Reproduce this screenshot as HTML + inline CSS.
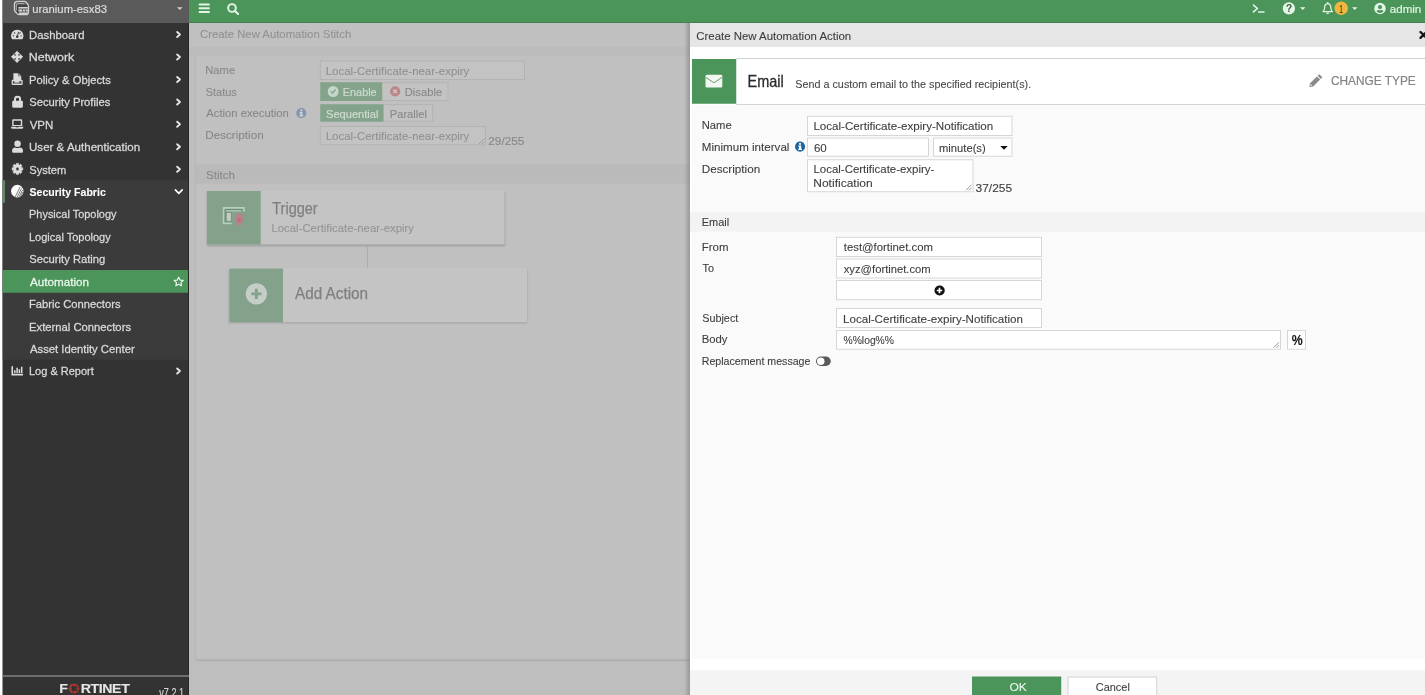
<!DOCTYPE html>
<html lang="en">
<head>
<meta charset="utf-8">
<title>FortiGate - uranium-esx83</title>
<style>
*{box-sizing:border-box;margin:0;padding:0}
#app{font-family:"Liberation Sans",sans-serif;font-size:48px;color:#3b3b3b;position:absolute;left:0;top:0;width:5700px;height:2780px;background:#fff;overflow:hidden}
ul{list-style:none}
.t{position:absolute;white-space:nowrap;transform-origin:0 50%;display:block;-webkit-text-stroke:0.4px currentColor}
.b{position:absolute;display:block}
svg{position:absolute;display:block;overflow:visible}
#side{position:absolute;left:10.4px;top:0;width:745.6px;height:2780px;background:#333;color:#dadada;overflow:hidden}
#host{position:absolute;left:0;top:0;width:100%;height:92px;background:#5a5a5a;color:#d6d6d6}
#top{position:absolute;left:756px;top:0;width:4944px;height:92px;background:#4b945a;color:#e4f5e6}
#main{position:absolute;left:756px;top:92px;width:2004px;height:2688px;background:#bebebe;color:#8c8c8c;overflow:hidden}
#panel{position:absolute;left:2760px;top:92px;width:2940px;height:2688px;background:#fafafa;overflow:hidden}
#shadow{position:absolute;left:2736px;top:92px;width:24px;height:2688px;background:linear-gradient(to right,rgba(120,120,120,0),rgba(120,120,120,.55))}
.inp{position:absolute;background:#fff;border:4px solid #d6d6d6}

html,body{width:1425px;height:695px;overflow:hidden;background:#fff;margin:0;padding:0}
#stage{position:absolute;left:0;top:0;width:1425px;height:695px;overflow:hidden;will-change:transform}
#app{transform:scale(0.25);transform-origin:0 0}
</style>
</head>
<body>
<div id="stage">
<div id="app">
<nav id="side"><div id="host"><svg style="left:44.8px;top:3.2px;width:61.6px;height:58.4px;color:#d2d2d2;" viewBox="0 0 15.4 14.6" preserveAspectRatio="none" fill="currentColor" aria-hidden="true"><path d="M3.6 0.7 H10.6 Q11.5 0.7 12.1 1.3 L14.1 3.5 Q14.7 4.1 14.7 5 V11.2 Q14.7 13.9 12 13.9 H5.3 Q4.5 13.9 3.9 13.3 L1.3 10.7 Q0.7 10.1 0.7 9.3 V3.6 Q0.7 0.7 3.6 0.7 Z" fill="none" stroke="currentColor" stroke-width="1.3" stroke-linejoin="round"/><path d="M2.6 9.6 V4.2 Q2.6 2.7 4.1 2.7 H10.6" fill="none" stroke="currentColor" stroke-width="0.8" opacity="0.85"/><path d="M4.2 4.4 H13.6 V5.9 H4.2 Z" fill="#3a3a3a"/><path d="M4.6 6.3 H14 V7.7 H4.6 Z M4.6 8.7 H8.4 V10.8 H4.6 Z M9.2 8.7 H11.2 V10.8 H9.2 Z M12 8.7 H14 V10.8 H12 Z M4.8 11.7 H14 V12.6 Q13.6 13.3 12.6 13.3 H5.6 Z"/><path d="M3.9 5 V12.6" stroke="#3a3a3a" stroke-width="1.1" fill="none"/></svg><span class="t" style="left:118.64px;top:7.6px;font-size:46px;line-height:56px;transform:scaleX(0.9819);color:#dcdcdc;-webkit-text-stroke:0.88px currentColor;">uranium-esx83</span><svg style="left:697.6px;top:28.8px;width:22.4px;height:11.2px;color:#cfcfcf;" viewBox="0 0 10 5" preserveAspectRatio="none" fill="currentColor" aria-hidden="true"><path d="M0 0 H10 L5 5 Z"/></svg></div><div class="b" style="left:0px;top:721.2px;width:745.6px;height:718px;background:#3b3b3b;"></div><div class="b" style="left:0px;top:721.2px;width:10px;height:90px;background:#5f8b69;"></div><div class="b" style="left:0px;top:1079.6px;width:745.6px;height:91.6px;background:#4b945a;"></div><ul><li><svg style="left:33.2px;top:118.8px;width:50px;height:38px;color:#dcdcdc;" viewBox="0.5 1 23 18" preserveAspectRatio="none" fill="currentColor" aria-hidden="true"><path d="M12 1 A11.5 11.5 0 0 0 2.2 18.4 Q2.6 19 3.4 19 H20.6 Q21.4 19 21.8 18.4 A11.5 11.5 0 0 0 12 1 Z"/><g fill="#333"><circle cx="5" cy="12.5" r="1.3"/><circle cx="7" cy="7.2" r="1.3"/><circle cx="19" cy="12.5" r="1.3"/><circle cx="17" cy="7.2" r="1.3"/><path d="M13.6 4.6 L15.2 5.1 L13.4 12.2 A2.4 2.4 0 1 1 11.8 11.7 Z"/></g></svg><span class="t" style="left:105.24px;top:111.6px;font-size:46px;line-height:56px;transform:scaleX(0.9853);-webkit-text-stroke:1.04px currentColor;">Dashboard</span><svg style="left:693.6px;top:124.4px;width:20.8px;height:28px;color:#e8e8e8;" viewBox="0 0 6 8" preserveAspectRatio="none" fill="currentColor" aria-hidden="true"><path d="M1.3 1.1 L4.6 4 L1.3 6.9" fill="none" stroke="currentColor" stroke-width="2.1" stroke-linecap="round" stroke-linejoin="round"/></svg></li><li><svg style="left:34px;top:203.2px;width:48.4px;height:48.4px;color:#dcdcdc;" viewBox="0 0 24 24" preserveAspectRatio="none" fill="currentColor" aria-hidden="true"><path d="M12 0.3 L17.4 6.2 H14.2 V9.8 H17.8 V6.6 L23.7 12 L17.8 17.4 V14.2 H14.2 V17.8 H17.4 L12 23.7 L6.6 17.8 H9.8 V14.2 H6.2 V17.4 L0.3 12 L6.2 6.6 V9.8 H9.8 V6.2 H6.6 Z" stroke="currentColor" stroke-width="0.8" stroke-linejoin="round"/></svg><span class="t" style="left:104.88px;top:201.32px;font-size:46px;line-height:56px;transform:scaleX(1.0805);-webkit-text-stroke:1.04px currentColor;">Network</span><svg style="left:693.6px;top:214.12px;width:20.8px;height:28px;color:#e8e8e8;" viewBox="0 0 6 8" preserveAspectRatio="none" fill="currentColor" aria-hidden="true"><path d="M1.3 1.1 L4.6 4 L1.3 6.9" fill="none" stroke="currentColor" stroke-width="2.1" stroke-linecap="round" stroke-linejoin="round"/></svg></li><li><svg style="left:33.6px;top:291.2px;width:49.2px;height:52px;color:#dcdcdc;" viewBox="0 0 24 26" preserveAspectRatio="none" fill="currentColor" aria-hidden="true"><path d="M4.6 0.8 H14.4 L20 6.4 V14.6 H16.4 L13.6 17.6 H8.8 L6.6 15.4 H4.6 Z"/><path d="M14.6 0.8 V6.2 H20" fill="none" stroke="#333" stroke-width="1.1"/><path d="M3.4 14.2 H20.6 Q22.8 14.2 22.8 16.4 V22.2 Q22.8 24.6 20.4 24.6 H3.6 Q1.2 24.6 1.2 22.2 V16.4 Q1.2 14.2 3.4 14.2 Z M4 17 Q3.6 17 3.6 17.4 V21.6 Q3.6 22.2 4.2 22.2 H19.8 Q20.4 22.2 20.4 21.6 V17.4 Q20.4 17 20 17 H17 L14.4 19.6 H8.2 L5.8 17 Z" fill-rule="evenodd"/><path d="M5 19.4 H19 V21.4 H5 Z" opacity="0.75"/></svg><span class="t" style="left:105.28px;top:291.04px;font-size:46px;line-height:56px;transform:scaleX(0.9763);-webkit-text-stroke:1.04px currentColor;">Policy &amp; Objects</span><svg style="left:693.6px;top:303.84px;width:20.8px;height:28px;color:#e8e8e8;" viewBox="0 0 6 8" preserveAspectRatio="none" fill="currentColor" aria-hidden="true"><path d="M1.3 1.1 L4.6 4 L1.3 6.9" fill="none" stroke="currentColor" stroke-width="2.1" stroke-linecap="round" stroke-linejoin="round"/></svg></li><li><svg style="left:37.2px;top:382.4px;width:44.4px;height:49.6px;color:#dcdcdc;" viewBox="0 0 22 25" preserveAspectRatio="none" fill="currentColor" aria-hidden="true"><path d="M4 10.4 V7.4 A7 7 0 0 1 18 7.4 V10.4 H19.4 Q21.6 10.4 21.6 12.6 V22.4 Q21.6 24.6 19.4 24.6 H2.6 Q0.4 24.6 0.4 22.4 V12.6 Q0.4 10.4 2.6 10.4 Z M8 10.4 H14 V7.4 A3 3 0 0 0 8 7.4 Z" fill-rule="evenodd"/></svg><span class="t" style="left:106.28px;top:380.76px;font-size:46px;line-height:56px;transform:scaleX(0.9756);-webkit-text-stroke:1.04px currentColor;">Security Profiles</span><svg style="left:693.6px;top:393.56px;width:20.8px;height:28px;color:#e8e8e8;" viewBox="0 0 6 8" preserveAspectRatio="none" fill="currentColor" aria-hidden="true"><path d="M1.3 1.1 L4.6 4 L1.3 6.9" fill="none" stroke="currentColor" stroke-width="2.1" stroke-linecap="round" stroke-linejoin="round"/></svg></li><li><svg style="left:33.2px;top:476.8px;width:49.6px;height:38.4px;color:#dcdcdc;" viewBox="0 0 25 19" preserveAspectRatio="none" fill="currentColor" aria-hidden="true"><path d="M4.2 0.2 H20.8 Q22.6 0.2 22.6 2 V13.6 H2.4 V2 Q2.4 0.2 4.2 0.2 Z M5.2 3 V11.2 H19.8 V3 Z" fill-rule="evenodd"/><path d="M0.2 14.8 H9.6 Q9.8 15.8 10.8 15.8 H14.2 Q15.2 15.8 15.4 14.8 H24.8 V15.8 Q24.8 18.8 21.8 18.8 H3.2 Q0.2 18.8 0.2 15.8 Z"/></svg><span class="t" style="left:108.2px;top:470.48px;font-size:46px;line-height:56px;transform:scaleX(1.0000);-webkit-text-stroke:1.04px currentColor;">VPN</span><svg style="left:693.6px;top:483.28px;width:20.8px;height:28px;color:#e8e8e8;" viewBox="0 0 6 8" preserveAspectRatio="none" fill="currentColor" aria-hidden="true"><path d="M1.3 1.1 L4.6 4 L1.3 6.9" fill="none" stroke="currentColor" stroke-width="2.1" stroke-linecap="round" stroke-linejoin="round"/></svg></li><li><svg style="left:37.2px;top:562.4px;width:44.4px;height:49.6px;color:#dcdcdc;" viewBox="0 0 22 25" preserveAspectRatio="none" fill="currentColor" aria-hidden="true"><circle cx="11" cy="6.6" r="6.4"/><path d="M0.2 22.4 V20.6 Q0.2 14.6 6.4 14.2 Q11 16.4 15.6 14.2 Q21.8 14.6 21.8 20.6 V22.4 Q21.8 24.8 19.4 24.8 H2.6 Q0.2 24.8 0.2 22.4 Z"/></svg><span class="t" style="left:105.16px;top:560.2px;font-size:46px;line-height:56px;transform:scaleX(1.0051);-webkit-text-stroke:1.04px currentColor;">User &amp; Authentication</span><svg style="left:693.6px;top:573px;width:20.8px;height:28px;color:#e8e8e8;" viewBox="0 0 6 8" preserveAspectRatio="none" fill="currentColor" aria-hidden="true"><path d="M1.3 1.1 L4.6 4 L1.3 6.9" fill="none" stroke="currentColor" stroke-width="2.1" stroke-linecap="round" stroke-linejoin="round"/></svg></li><li><svg style="left:36.8px;top:651.6px;width:45.6px;height:47.2px;color:#dcdcdc;" viewBox="0 0 24 24" preserveAspectRatio="none" fill="currentColor" aria-hidden="true"><path d="M9.34 3.40 L9.45 0.58 L14.55 0.58 L14.66 3.40 L16.20 4.04 L18.27 2.12 L21.88 5.73 L19.96 7.80 L20.60 9.34 L23.42 9.45 L23.42 14.55 L20.60 14.66 L19.96 16.20 L21.88 18.27 L18.27 21.88 L16.20 19.96 L14.66 20.60 L14.55 23.42 L9.45 23.42 L9.34 20.60 L7.80 19.96 L5.73 21.88 L2.12 18.27 L4.04 16.20 L3.40 14.66 L0.58 14.55 L0.58 9.45 L3.40 9.34 L4.04 7.80 L2.12 5.73 L5.73 2.12 L7.80 4.04 Z M12 8.8 A3.2 3.2 0 1 0 12 15.2 A3.2 3.2 0 1 0 12 8.8 Z" fill-rule="evenodd" stroke="currentColor" stroke-width="0.8" stroke-linejoin="round"/></svg><span class="t" style="left:106.32px;top:649.92px;font-size:46px;line-height:56px;transform:scaleX(0.9660);-webkit-text-stroke:1.04px currentColor;">System</span><svg style="left:693.6px;top:662.72px;width:20.8px;height:28px;color:#e8e8e8;" viewBox="0 0 6 8" preserveAspectRatio="none" fill="currentColor" aria-hidden="true"><path d="M1.3 1.1 L4.6 4 L1.3 6.9" fill="none" stroke="currentColor" stroke-width="2.1" stroke-linecap="round" stroke-linejoin="round"/></svg></li><li><svg style="left:33.6px;top:739.2px;width:50.4px;height:51.2px;color:#fff;" viewBox="0 0 24 24" preserveAspectRatio="none" fill="currentColor" aria-hidden="true"><circle cx="12" cy="12" r="11.8"/><g stroke="#3a3a3a" stroke-width="1.3" fill="none"><path d="M8.2 22.4 L17.4 4.2"/><path d="M11.8 23 L20 7"/><path d="M15.4 22.6 L22 10"/><path d="M19 20.8 L22.8 13.6"/></g></svg><span class="t" style="left:107.36px;top:739.64px;font-size:46px;line-height:56px;transform:scaleX(0.9179);color:#fff;font-weight:bold;">Security Fabric</span><svg style="left:688px;top:756px;width:34.4px;height:20.8px;color:#fff;" viewBox="0 0 10 6" preserveAspectRatio="none" fill="currentColor" aria-hidden="true"><path d="M1 1 L5 5 L9 1" fill="none" stroke="currentColor" stroke-width="1.9" stroke-linecap="round" stroke-linejoin="round"/></svg></li><li><span class="t" style="left:105.4px;top:829.36px;font-size:46px;line-height:56px;transform:scaleX(0.9532);-webkit-text-stroke:1.04px currentColor;">Physical Topology</span></li><li><span class="t" style="left:105.36px;top:919.08px;font-size:46px;line-height:56px;transform:scaleX(0.9555);-webkit-text-stroke:1.04px currentColor;">Logical Topology</span></li><li><span class="t" style="left:106.28px;top:1008.8px;font-size:46px;line-height:56px;transform:scaleX(0.9752);-webkit-text-stroke:1.04px currentColor;">Security Rating</span></li><li><span class="t" style="left:109.2px;top:1098.52px;font-size:46px;line-height:56px;transform:scaleX(1.0139);color:#eaf7ec;-webkit-text-stroke:1.04px currentColor;">Automation</span><svg style="left:682px;top:1103.6px;width:45.6px;height:44.8px;color:#eaf7ec;" viewBox="0 0 24 24" preserveAspectRatio="none" fill="currentColor" aria-hidden="true"><path d="M12 2.4 L14.9 8.7 L21.7 9.5 L16.7 14.2 L18 21 L12 17.6 L6 21 L7.3 14.2 L2.3 9.5 L9.1 8.7 Z" fill="none" stroke="currentColor" stroke-width="2.5" stroke-linejoin="round"/></svg></li><li><span class="t" style="left:105.32px;top:1188.24px;font-size:46px;line-height:56px;transform:scaleX(0.9741);-webkit-text-stroke:1.04px currentColor;">Fabric Connectors</span></li><li><span class="t" style="left:105.28px;top:1277.96px;font-size:46px;line-height:56px;transform:scaleX(0.9791);-webkit-text-stroke:1.04px currentColor;">External Connectors</span></li><li><span class="t" style="left:109.2px;top:1367.68px;font-size:46px;line-height:56px;transform:scaleX(0.9812);-webkit-text-stroke:1.04px currentColor;">Asset Identity Center</span></li><li><svg style="left:34.4px;top:1464.4px;width:48px;height:38.4px;color:#dcdcdc;" viewBox="0 0 24 20" preserveAspectRatio="none" fill="currentColor" aria-hidden="true"><path d="M0.4 0.4 H3.6 V16 H23.6 V19.6 H0.4 Z"/><path d="M5.6 8.6 H8.6 V14.4 H5.6 Z M10.2 3.4 H13.2 V14.4 H10.2 Z M14.8 6.6 H17.8 V14.4 H14.8 Z M19.4 1.6 H22.4 V14.4 H19.4 Z"/></svg><span class="t" style="left:105.36px;top:1457.4px;font-size:46px;line-height:56px;transform:scaleX(0.9558);-webkit-text-stroke:1.04px currentColor;">Log &amp; Report</span><svg style="left:693.6px;top:1470.2px;width:20.8px;height:28px;color:#e8e8e8;" viewBox="0 0 6 8" preserveAspectRatio="none" fill="currentColor" aria-hidden="true"><path d="M1.3 1.1 L4.6 4 L1.3 6.9" fill="none" stroke="currentColor" stroke-width="2.1" stroke-linecap="round" stroke-linejoin="round"/></svg></li></ul><div class="b" style="left:741.6px;top:92px;width:4px;height:2688px;background:#262626;"></div><div class="b" style="left:0px;top:2700px;width:745.6px;height:8px;background:#6e6e6e;"></div><div class="b" id="logo" style="left:0;top:0"><span class="t" style="left:226.88px;top:2729px;font-size:48px;line-height:56px;transform:scaleX(1.1799);color:#e6e6e6;font-weight:bold;"><span style="letter-spacing:2px">F</span><span style="color:#c8372d;-webkit-text-stroke:1.8px #c8372d;letter-spacing:4px">O</span><span style="letter-spacing:-1.36px">RTINET</span></span></div><svg style="left:268px;top:2737.2px;width:43.2px;height:35.2px;" viewBox="0 0 11.3 8.8" preserveAspectRatio="none" fill="currentColor" aria-hidden="true"><path d="M3.6 0 V8.8 M7.7 0 V8.8 M0 2.9 H11.3 M0 5.9 H11.3" stroke="#333" stroke-width="0.7" fill="none"/></svg><span class="t" style="left:626.4px;top:2742px;font-size:49.2px;line-height:60px;transform:scaleX(0.7394);color:#d4d4d4;-webkit-text-stroke:0.8px currentColor;">v7.2.1</span></nav>
<header id="top"><div class="b" style="left:0px;top:88px;width:4944px;height:4px;background:#447f51;"></div><svg style="left:38.8px;top:14.4px;width:44px;height:38.4px;" viewBox="0 0 22 20" preserveAspectRatio="none" fill="currentColor" aria-hidden="true"><rect x="0" y="0.2" width="22" height="4.2" rx="1.2"/><rect x="0" y="7.9" width="22" height="4.2" rx="1.2"/><rect x="0" y="15.6" width="22" height="4.2" rx="1.2"/></svg><svg style="left:152px;top:12px;width:48.8px;height:48.8px;" viewBox="0 0 24 24" preserveAspectRatio="none" fill="currentColor" aria-hidden="true"><circle cx="9.8" cy="9.8" r="7.6" fill="none" stroke="currentColor" stroke-width="3.8"/><path d="M15.6 15.6 L21.8 21.8" stroke="currentColor" stroke-width="4.2" stroke-linecap="round"/></svg><svg style="left:4254.4px;top:16px;width:49.6px;height:36px;" viewBox="0 0 26 20" preserveAspectRatio="none" fill="currentColor" aria-hidden="true"><path d="M2 2.4 L10.4 10 L2 17.6" fill="none" stroke="currentColor" stroke-width="3.5" stroke-linecap="round" stroke-linejoin="round"/><path d="M12.8 17.6 H24" stroke="currentColor" stroke-width="3.4" stroke-linecap="round"/></svg><div class="b" style="left:4375.2px;top:9.2px;width:48.8px;height:48.8px;border-radius:50%;background:#e4f5e6;"></div><span class="t" style="left:4388.08px;top:9.2px;font-size:42px;line-height:52px;transform:scaleX(0.9524);color:#3a6c46;font-weight:bold;">?</span><svg style="left:4444px;top:28.8px;width:21.6px;height:11.2px;" viewBox="0 0 10 5" preserveAspectRatio="none" fill="currentColor" aria-hidden="true"><path d="M0 0 H10 L5 5 Z"/></svg><svg style="left:4533.2px;top:8.4px;width:43.6px;height:49.6px;" viewBox="0 0 22 25" preserveAspectRatio="none" fill="currentColor" aria-hidden="true"><path d="M11 3.2 Q4.8 4 4.8 11 Q4.8 16.4 1.4 19.4 H20.6 Q17.2 16.4 17.2 11 Q17.2 4 11 3.2 Z" fill="none" stroke="currentColor" stroke-width="2.5" stroke-linejoin="round"/><circle cx="11" cy="2" r="1.9"/><path d="M8 21.8 A3 3 0 0 0 14 21.8 Z"/></svg><div class="b" style="left:4581.6px;top:6px;width:54.4px;height:54.4px;border-radius:50%;background:#efb73e;"></div><span class="t" style="left:4601px;top:9px;font-size:44.8px;line-height:52px;transform:scaleX(0.6000);color:#3a2f14;">1</span><svg style="left:4652px;top:28.8px;width:21.6px;height:11.2px;" viewBox="0 0 10 5" preserveAspectRatio="none" fill="currentColor" aria-hidden="true"><path d="M0 0 H10 L5 5 Z"/></svg><svg style="left:4740px;top:9.6px;width:48px;height:48px;" viewBox="0 0 24 24" preserveAspectRatio="none" fill="currentColor" aria-hidden="true"><path d="M12 0.5 A11.5 11.5 0 1 0 12 23.5 A11.5 11.5 0 1 0 12 0.5 Z M12 5 A4.2 4.2 0 1 1 12 13.4 A4.2 4.2 0 1 1 12 5 Z M12 21 Q7.5 21 5 17.6 Q6.2 15 9 15 Q12 16.2 15 15 Q17.8 15 19 17.6 Q16.5 21 12 21 Z" fill-rule="evenodd"/></svg><span class="t" style="left:4802.8px;top:7.6px;font-size:46.8px;line-height:56px;transform:scaleX(0.9902);-webkit-text-stroke:0.8px currentColor;">admin</span></header>
<main id="main"><div class="b" style="left:0px;top:0px;width:2004px;height:96.8px;background:#c0c0c0;"></div><div class="b" style="left:0px;top:96.8px;width:2004px;height:32px;background:#bcbcbc;"></div><span class="t" style="left:44.44px;top:16.8px;font-size:46.4px;line-height:56px;transform:scaleX(0.9772);color:#919191;">Create New Automation Stitch</span><div class="b" style="left:24px;top:125.6px;width:2000px;height:2420.8px;background:#c0c0c0;border:4px solid #b8b8b8;box-shadow:0 4px 4px rgba(0,0,0,.10);"></div><span class="t" style="left:65.32px;top:159.2px;font-size:46.4px;line-height:56px;transform:scaleX(0.9695);color:#878787;">Name</span><span class="t" style="left:67.32px;top:246.4px;font-size:46.4px;line-height:56px;transform:scaleX(0.9437);color:#878787;">Status</span><span class="t" style="left:69.2px;top:333.2px;font-size:46.4px;line-height:56px;transform:scaleX(0.9709);color:#878787;">Action execution</span><span class="t" style="left:65.16px;top:419.6px;font-size:46.4px;line-height:56px;transform:scaleX(1.0062);color:#878787;">Description</span><svg style="left:429.2px;top:339.6px;width:40.4px;height:40.8px;" viewBox="0 0 20 20" preserveAspectRatio="none" fill="currentColor" aria-hidden="true"><circle cx="10" cy="10" r="10" fill="#8396ab"/><circle cx="10" cy="4.7" r="2.1" fill="#cdd3d9"/><path d="M6.6 7.9 H12.3 V14 H13.8 V16.6 H6.3 V14 H7.9 V10.2 H6.6 Z" fill="#cdd3d9"/></svg><div class="b" style="left:523.2px;top:149.6px;width:821.2px;height:78.4px;background:#c3c3c3;border:4px solid #b3b3b3;"></div><span class="t" style="left:547.24px;top:162.8px;font-size:46.4px;line-height:56px;transform:scaleX(0.9855);color:#909090;">Local-Certificate-near-expiry</span><div class="b" style="left:524.8px;top:237.2px;width:248.8px;height:74.4px;background:#83a38b;"></div><div class="b" style="left:554.8px;top:252.4px;width:43.2px;height:43.2px;border-radius:50%;background:#c6d6c9;"></div><svg style="left:563.6px;top:262.4px;width:25.6px;height:22.4px;" viewBox="0 0 8 7" preserveAspectRatio="none" fill="currentColor" aria-hidden="true"><path d="M1 3.6 L3.1 5.7 L7 1.2" fill="none" stroke="#83a38b" stroke-width="1.7"/></svg><span class="t" style="left:615.04px;top:248px;font-size:46.4px;line-height:56px;transform:scaleX(0.9391);color:#cfdcd1;-webkit-text-stroke:0.8px currentColor;">Enable</span><div class="b" style="left:773.6px;top:237.2px;width:264px;height:74.4px;background:#c3c3c3;border:4px solid #b3b3b3;border-left:0;"></div><div class="b" style="left:804.4px;top:253.2px;width:40.8px;height:40.8px;border-radius:50%;background:#bd8585;"></div><svg style="left:814.4px;top:263.2px;width:20.8px;height:20.8px;" viewBox="0 0 6 6" preserveAspectRatio="none" fill="currentColor" aria-hidden="true"><path d="M1 1 L5 5 M5 1 L1 5" fill="none" stroke="#d0c4c4" stroke-width="1.7"/></svg><span class="t" style="left:863.32px;top:248px;font-size:46.4px;line-height:56px;transform:scaleX(0.9664);color:#878787;">Disable</span><div class="b" style="left:524.8px;top:324.8px;width:254.4px;height:70.4px;background:#83a38b;"></div><span class="t" style="left:548.48px;top:334.4px;font-size:46.4px;line-height:56px;transform:scaleX(0.9570);color:#cfdcd1;-webkit-text-stroke:0.8px currentColor;">Sequential</span><div class="b" style="left:779.2px;top:324.8px;width:197.6px;height:70.4px;background:#c3c3c3;border:4px solid #b3b3b3;border-left:0;"></div><span class="t" style="left:802.96px;top:334.4px;font-size:46.4px;line-height:56px;transform:scaleX(0.9622);color:#878787;">Parallel</span><div class="b" style="left:523.2px;top:412px;width:664.4px;height:76.8px;background:#c3c3c3;border:4px solid #b3b3b3;"></div><span class="t" style="left:547.24px;top:422.4px;font-size:46.4px;line-height:56px;transform:scaleX(0.9855);color:#909090;">Local-Certificate-near-expiry</span><svg style="left:1158.4px;top:460px;width:24px;height:24px;" viewBox="0 0 6 6" preserveAspectRatio="none" fill="currentColor" aria-hidden="true"><path d="M0.5 6 L6 0.5 M3.5 6 L6 3.5" stroke="#9a9a9a" stroke-width="0.9" fill="none"/></svg><span class="t" style="left:1197.16px;top:442.4px;font-size:46.4px;line-height:56px;transform:scaleX(1.0203);color:#878787;">29/255</span><div class="b" style="left:28px;top:565.6px;width:2000px;height:77.6px;background:#bababa;"></div><span class="t" style="left:67.6px;top:579.2px;font-size:46.4px;line-height:56px;transform:scaleX(1.0018);color:#878787;">Stitch</span><div class="b" style="left:72px;top:672px;width:1190.4px;height:214.4px;background:#c4c4c4;box-shadow:0 4px 8px rgba(0,0,0,.2),0 -2px 0 rgba(255,255,255,.12);"></div><div class="b" style="left:72px;top:672px;width:215.2px;height:214.4px;background:#84a28b;"></div><svg style="left:135.2px;top:736px;width:88px;height:81.6px;" viewBox="0 0 22 20.4" preserveAspectRatio="none" fill="currentColor" aria-hidden="true"><path d="M0.9 17 V0.9 H21.1 V4.6" fill="none" stroke="#b3d1be" stroke-width="1.7"/><path d="M0.1 16.4 H9" fill="none" stroke="#b3d1be" stroke-width="1.6"/><path d="M2.4 15.4 V2.5 H19.6" fill="none" stroke="#6f8875" stroke-width="0.9"/><path d="M3.2 3.9 H18.4" stroke="#b3d1be" stroke-width="1.1"/><rect x="3.5" y="5.6" width="5" height="8.6" fill="#c4cdc3" stroke="#6f8875" stroke-width="0.7"/><path d="M16.3 6.2 A4.3 4.3 0 0 1 20.6 10.5 Q20.6 14 16.3 20.2 Q12 14 12 10.5 A4.3 4.3 0 0 1 16.3 6.2 Z" fill="#b7828a"/><circle cx="16.3" cy="13.2" r="1.9" fill="#c06f7a"/></svg><span class="t" style="left:333.12px;top:705.2px;font-size:64.8px;line-height:76px;transform:scaleX(0.8955);color:#7f7f7f;-webkit-text-stroke:1px currentColor;">Trigger</span><span class="t" style="left:329.68px;top:790.8px;font-size:46.4px;line-height:56px;transform:scaleX(0.9785);color:#939393;">Local-Certificate-near-expiry</span><div class="b" style="left:712px;top:886.4px;width:4px;height:96px;background:#acacac;"></div><div class="b" style="left:161.2px;top:982px;width:1191.2px;height:215.2px;background:#c4c4c4;box-shadow:0 4px 8px rgba(0,0,0,.2),0 -2px 0 rgba(255,255,255,.12);"></div><div class="b" style="left:161.2px;top:982px;width:215.2px;height:215.2px;background:#84a28b;"></div><div class="b" style="left:226.8px;top:1040.8px;width:85.2px;height:85.2px;border-radius:50%;background:#c4cdc6;"></div><svg style="left:247.2px;top:1061.2px;width:44.8px;height:44.8px;" viewBox="0 0 11 11" preserveAspectRatio="none" fill="currentColor" aria-hidden="true"><path d="M5.5 0.5 V10.5 M0.5 5.5 H10.5" stroke="#84a28b" stroke-width="2.8" fill="none"/></svg><span class="t" style="left:423.6px;top:1044px;font-size:64.8px;line-height:76px;transform:scaleX(0.9438);color:#7f7f7f;-webkit-text-stroke:1px currentColor;">Add Action</span></main>
<div id="shadow"></div>
<section id="panel"><div class="b" style="left:0px;top:0px;width:2940px;height:96px;background:#e6e6e6;"></div><span class="t" style="left:24.84px;top:22.4px;font-size:46.4px;line-height:56px;transform:scaleX(0.9846);color:#3d3d3d;">Create New Automation Action</span><svg style="left:2916px;top:30.4px;width:36px;height:35.2px;color:#161616;" viewBox="0 0 12 12" preserveAspectRatio="none" fill="currentColor" aria-hidden="true"><path d="M2 2 L10 10 M10 2 L2 10" stroke="currentColor" stroke-width="3.1" stroke-linecap="round" fill="none"/></svg><div class="b" style="left:0px;top:96px;width:2940px;height:232px;background:#fff;"></div><div class="b" style="left:184.8px;top:140px;width:2756px;height:4px;background:#d3d3d3;"></div><div class="b" style="left:184.8px;top:323.6px;width:2756px;height:4px;background:#d3d3d3;"></div><div class="b" style="left:8px;top:143.6px;width:176.8px;height:179.2px;background:#4b945a;"></div><svg style="left:62.4px;top:207.2px;width:67.2px;height:51.2px;color:#f1f8f2;" viewBox="0 0 24 18" preserveAspectRatio="none" fill="currentColor" aria-hidden="true"><path d="M2 0 H22 Q24 0 24 2 V16 Q24 18 22 18 H2 Q0 18 0 16 V2 Q0 0 2 0 Z"/><path d="M0.4 3.6 L10.8 10.6 Q12 11.4 13.2 10.6 L23.6 3.6" fill="none" stroke="#5d8c68" stroke-width="1.3"/></svg><span class="t" style="left:229.92px;top:194.8px;font-size:64.8px;line-height:76px;transform:scaleX(0.8941);color:#2a2a2a;-webkit-text-stroke:1.2px currentColor;">Email</span><span class="t" style="left:420.52px;top:214px;font-size:46.4px;line-height:56px;transform:scaleX(0.9311);color:#474747;">Send a custom email to the specified recipient(s).</span><svg style="left:2476px;top:204px;width:54.4px;height:53.6px;color:#8b8b8b;" viewBox="0 0 24 24" preserveAspectRatio="none" fill="currentColor" aria-hidden="true"><path d="M17.2 1.2 Q18.2 0.2 19.2 1.2 L22.8 4.8 Q23.8 5.8 22.8 6.8 L20.8 8.8 L15.2 3.2 Z"/><path d="M14 4.4 L19.6 10 L7.4 22.2 L1 23.4 Q0.4 23.5 0.6 22.9 L1.8 16.6 Z M3.2 17.8 L2.6 21.2 L6 20.6 Z" fill-rule="evenodd"/></svg><span class="t" style="left:2563.92px;top:201px;font-size:49.6px;line-height:60px;transform:scaleX(0.9559);color:#858585;-webkit-text-stroke:0.88px currentColor;">CHANGE TYPE</span><div class="b" style="left:0px;top:328px;width:6.4px;height:2215.6px;background:#fff;"></div><span class="t" style="left:46.92px;top:380.8px;font-size:46.4px;line-height:56px;transform:scaleX(0.9695);color:#3d3d3d;">Name</span><span class="t" style="left:46.8px;top:468px;font-size:46.4px;line-height:56px;transform:scaleX(1.0006);color:#3d3d3d;">Minimum interval</span><span class="t" style="left:46.76px;top:554.4px;font-size:46.4px;line-height:56px;transform:scaleX(1.0062);color:#3d3d3d;">Description</span><svg style="left:420px;top:474.4px;width:40.4px;height:40.8px;" viewBox="0 0 20 20" preserveAspectRatio="none" fill="currentColor" aria-hidden="true"><circle cx="10" cy="10" r="10" fill="#1e6399"/><circle cx="10" cy="4.7" r="2.1" fill="#f4fbff"/><path d="M6.6 7.9 H12.3 V14 H13.8 V16.6 H6.3 V14 H7.9 V10.2 H6.6 Z" fill="#f4fbff"/></svg><div class="inp" style="left:467.6px;top:371.2px;width:822.4px;height:80.4px;"></div><span class="t" style="left:493.6px;top:384.8px;font-size:46.4px;line-height:56px;transform:scaleX(1.0000);color:#3d3d3d;">Local-Certificate-expiry-Notification</span><div class="inp" style="left:467.6px;top:457.6px;width:488.4px;height:77.6px;"></div><span class="t" style="left:495.6px;top:471.2px;font-size:46.4px;line-height:56px;transform:scaleX(1.0000);color:#3d3d3d;">60</span><div class="inp" style="left:972px;top:457.6px;width:318px;height:77.6px;"></div><span class="t" style="left:996.32px;top:471.2px;font-size:46.4px;line-height:56px;transform:scaleX(0.9660);color:#3d3d3d;">minute(s)</span><svg style="left:1241.2px;top:492px;width:30px;height:15.2px;color:#111;" viewBox="0 0 10 5" preserveAspectRatio="none" fill="currentColor" aria-hidden="true"><path d="M0 0 H10 L5 5 Z"/></svg><div class="inp" style="left:467.6px;top:545.2px;width:666.8px;height:131.6px;"></div><span class="t" style="left:493.64px;top:557.2px;font-size:46.4px;line-height:56px;transform:scaleX(0.9868);color:#3d3d3d;">Local-Certificate-expiry-</span><span class="t" style="left:493.44px;top:610.8px;font-size:46.4px;line-height:56px;transform:scaleX(1.0368);color:#3d3d3d;">Notification</span><svg style="left:1102.4px;top:644.8px;width:24px;height:24px;" viewBox="0 0 6 6" preserveAspectRatio="none" fill="currentColor" aria-hidden="true"><path d="M0.5 6 L6 0.5 M3.5 6 L6 3.5" stroke="#8a8a8a" stroke-width="0.9" fill="none"/></svg><span class="t" style="left:1141.92px;top:631.2px;font-size:46.4px;line-height:56px;transform:scaleX(1.0319);color:#3d3d3d;">37/255</span><div class="b" style="left:0px;top:754px;width:2940px;height:80.8px;background:#f3f3f3;"></div><span class="t" style="left:47px;top:767.6px;font-size:46.4px;line-height:56px;transform:scaleX(0.9468);color:#3d3d3d;">Email</span><span class="t" style="left:46.84px;top:865.6px;font-size:46.4px;line-height:56px;transform:scaleX(0.9901);color:#3d3d3d;">From</span><span class="t" style="left:49.88px;top:950.8px;font-size:46.4px;line-height:56px;transform:scaleX(0.9391);color:#3d3d3d;">To</span><div class="inp" style="left:584.4px;top:854.8px;width:823.6px;height:80.8px;"></div><span class="t" style="left:614.6px;top:868.4px;font-size:46.4px;line-height:56px;transform:scaleX(0.9800);color:#3d3d3d;">test@fortinet.com</span><div class="inp" style="left:584.4px;top:942.4px;width:823.6px;height:79.2px;"></div><span class="t" style="left:614.64px;top:954.4px;font-size:46.4px;line-height:56px;transform:scaleX(0.9690);color:#3d3d3d;">xyz@fortinet.com</span><div class="inp" style="left:584.4px;top:1028.4px;width:823.6px;height:80.4px;"></div><div class="b" style="left:978px;top:1049.6px;width:40.8px;height:40.8px;border-radius:50%;background:#111;"></div><svg style="left:986.4px;top:1058px;width:24px;height:24px;" viewBox="0 0 6 6" preserveAspectRatio="none" fill="currentColor" aria-hidden="true"><path d="M3 0.3 V5.7 M0.3 3 H5.7" stroke="#fff" stroke-width="1.7" fill="none"/></svg><span class="t" style="left:48.92px;top:1150.4px;font-size:46.4px;line-height:56px;transform:scaleX(0.9316);color:#3d3d3d;">Subject</span><div class="inp" style="left:584.4px;top:1140px;width:823.6px;height:80px;"></div><span class="t" style="left:611.6px;top:1153.6px;font-size:46.4px;line-height:56px;transform:scaleX(1.0011);color:#3d3d3d;">Local-Certificate-expiry-Notification</span><span class="t" style="left:46.92px;top:1236.8px;font-size:46.4px;line-height:56px;transform:scaleX(0.9743);color:#3d3d3d;">Body</span><div class="inp" style="left:584.4px;top:1228px;width:1779.6px;height:79.2px;"></div><span class="t" style="left:613.84px;top:1240px;font-size:46.4px;line-height:56px;transform:scaleX(0.8897);color:#3d3d3d;">%%log%%</span><svg style="left:2331.6px;top:1274.8px;width:24px;height:24px;" viewBox="0 0 6 6" preserveAspectRatio="none" fill="currentColor" aria-hidden="true"><path d="M0.5 6 L6 0.5 M3.5 6 L6 3.5" stroke="#8a8a8a" stroke-width="0.9" fill="none"/></svg><div class="inp" style="left:2388.4px;top:1228px;width:75.6px;height:79.2px;"></div><span class="t" style="left:2407.12px;top:1235.6px;font-size:56.8px;line-height:68px;transform:scaleX(0.8667);color:#151515;font-weight:bold;">%</span><span class="t" style="left:47.12px;top:1323.2px;font-size:46.4px;line-height:56px;transform:scaleX(0.9162);color:#3d3d3d;">Replacement message</span><div class="b" style="left:503.6px;top:1333.6px;width:59.2px;height:38.4px;border-radius:20px;background:#5a5a5a;"></div><div class="b" style="left:507.6px;top:1337.6px;width:30.4px;height:30.4px;border-radius:50%;background:#fff;"></div><div class="b" style="left:0px;top:2543.6px;width:2940px;height:48px;background:#fff;"></div><div class="b" style="left:0px;top:2589.2px;width:2940px;height:100px;background:#f4f4f4;"></div><div class="b" style="left:1128px;top:2614px;width:357.2px;height:80px;background:#4b945a;"></div><span class="t" style="left:1277.92px;top:2626.4px;font-size:46.4px;line-height:56px;transform:scaleX(1.0375);color:#eaf7ec;">OK</span><div class="b" style="left:1510px;top:2614px;width:358.8px;height:80px;background:#fff;border:4px solid #d0d0d0;"></div><span class="t" style="left:1623.32px;top:2626.4px;font-size:46.4px;line-height:56px;transform:scaleX(0.9439);color:#3d3d3d;">Cancel</span></section>
</div>
</div>
</body>
</html>
